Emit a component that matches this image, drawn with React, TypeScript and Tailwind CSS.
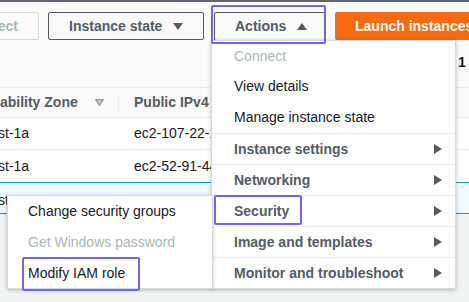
function Caret({ dir }: { dir: "down" | "up" | "right" }) {
  if (dir === "right") {
    return (
      <svg width="8" height="10" viewBox="0 0 8 10" className="shrink-0">
        <path d="M0 0 L8 5 L0 10 Z" fill="#545b64" />
      </svg>
    );
  }
  return (
    <svg width="10" height="7" viewBox="0 0 10 7" className="shrink-0">
      {dir === "down" ? (
        <path d="M0 0 L10 0 L5 7 Z" fill="#545b64" />
      ) : (
        <path d="M0 7 L10 7 L5 0 Z" fill="#545b64" />
      )}
    </svg>
  );
}

const groups = [
  "Instance settings",
  "Networking",
  "Security",
  "Image and templates",
  "Monitor and troubleshoot",
];

export default function App() {
  return (
    <div
      className="relative w-[469px] h-[302px] overflow-hidden bg-[#f2f3f3] text-[14px] text-[#16191f]"
      style={{ fontFamily: '"Liberation Sans", Arial, sans-serif' }}
    >
      <div className="h-[2px] bg-[#5f6670]" />

      {/* toolbar */}
      <div className="bg-[#fafafa]">
        <div className="flex h-[43px] items-start pt-[10px]">
          <div className="flex h-[28px] w-[110px] -ml-[71px] shrink-0 items-center justify-end rounded-[2px] border border-[#d5dbdb] pr-[20px] font-bold text-[#aab7b8]">
            Connect
          </div>
          <div className="ml-[9px] flex h-[28px] w-[156px] shrink-0 items-center gap-[11px] rounded-[2px] border border-[#545b64] pl-[20px] font-bold text-[#545b64]">
            Instance state
            <Caret dir="down" />
          </div>
          <div className="ml-[10px] flex h-[29px] w-[111px] shrink-0 items-center gap-[11px] rounded-[2px] border border-[#545b64] pl-[20px] font-bold text-[#545b64]">
            Actions
            <Caret dir="up" />
          </div>
          <div className="ml-[10px] flex h-[28px] w-[150px] shrink-0 items-center rounded-[2px] bg-[#f86a0e] pl-[20px] font-bold whitespace-nowrap text-white">
            Launch instances
          </div>
        </div>

        {/* pagination */}
        <div className="h-[42px] pl-[458px] pt-[7px] font-bold">1</div>

        {/* table header */}
        <div className="flex h-[31px] items-center border-y border-[#eaeded] font-bold text-[#545b64] whitespace-nowrap">
          <div className="-ml-[33px] flex w-[151px] shrink-0 items-center">
            Availability Zone
            <svg width="9" height="7" viewBox="0 0 9 7" className="ml-[17px]">
              <path d="M0.8 0.8 L8.2 0.8 L4.5 6.2 Z" fill="#d5dbdb" stroke="#879596" strokeWidth="1.2" />
            </svg>
          </div>
          <div className="h-[16px] w-px bg-[#eaeded]" />
          <div className="pl-[15px]">Public IPv4 DNS</div>
        </div>
      </div>

      {/* rows */}
      <div className="bg-white">
        <div className="flex h-[32px] items-center border-b border-[#eaeded] whitespace-nowrap">
          <div className="-ml-[37px] w-[156px] shrink-0">us-east-1a</div>
          <div className="pl-[15px]">ec2-107-22-10-1.compute</div>
        </div>
        <div className="flex h-[32px] items-center whitespace-nowrap">
          <div className="-ml-[37px] w-[156px] shrink-0">us-east-1a</div>
          <div className="pl-[15px]">ec2-52-91-44-2.compute</div>
        </div>
      </div>
      <div className="flex h-[32px] items-center border-y border-[#0a9bc8] bg-[#f1faff] whitespace-nowrap">
        <div className="-ml-[37px] w-[156px] shrink-0 pt-[4px]">us-east-1a</div>
      </div>

      {/* actions menu */}
      <div className="absolute left-[211px] top-[40px] w-[245px] h-[249px] border border-[#d5dbdb] bg-white shadow-[0_1px_4px_rgba(0,0,0,0.25)]">
        <div className="flex h-[30px] items-center pl-[22px] text-[#aab7b8]">Connect</div>
        <div className="flex h-[31px] items-center pl-[22px]">View details</div>
        <div className="flex h-[31px] items-center pl-[22px]">Manage instance state</div>
        {groups.map((g) => (
          <div
            key={g}
            className="flex h-[31px] items-center justify-between border-t border-[#eaeded] pl-[22px] pr-[13px] font-bold text-[#545b64]"
          >
            {g}
            <Caret dir="right" />
          </div>
        ))}
      </div>

      {/* security submenu */}
      <div className="absolute left-[7px] top-[195px] w-[206px] h-[94px] border border-[#d5dbdb] bg-white shadow-[0_1px_4px_rgba(0,0,0,0.25)]">
        <div className="flex h-[31px] items-center pl-[20px]">Change security groups</div>
        <div className="flex h-[31px] items-center pl-[20px] text-[#aab7b8]">Get Windows password</div>
        <div className="flex h-[31px] items-center pl-[20px]">Modify IAM role</div>
      </div>

      {/* highlight boxes */}
      <div className="absolute left-[211px] top-[5px] w-[115px] h-[39px] rounded-[2px] border-2 border-[#6f66f0]" />
      <div className="absolute left-[214px] top-[195px] w-[88px] h-[30px] rounded-[2px] border-2 border-[#6f66f0]" />
      <div className="absolute left-[22px] top-[257px] w-[118px] h-[34px] rounded-[2px] border-2 border-[#6f66f0]" />
    </div>
  );
}
